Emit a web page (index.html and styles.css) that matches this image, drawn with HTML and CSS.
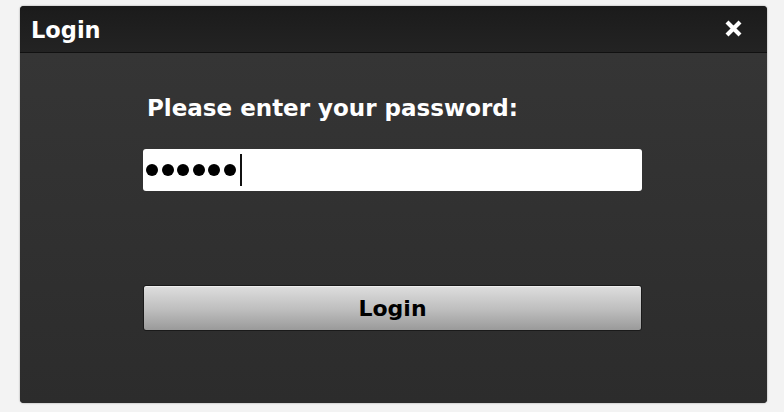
FILE: index.html
```html
<!DOCTYPE html>
<html lang="en">
<head>
<meta charset="utf-8">
<title>Login</title>
<link rel="stylesheet" href="styles.css">
</head>
<body>
<div class="dialog">
  <div class="header">
    <span class="title">Login</span>
    <span class="close">
      <svg width="19" height="17" viewBox="0 0 19 17"><path d="M3 2 L16 15 M16 2 L3 15" stroke="#fff" stroke-width="4.2" stroke-linecap="butt"/></svg>
    </span>
  </div>
  <div class="body">
    <div class="label">Please enter your password:</div>
    <div class="input">
      <span class="dots"><i></i><i></i><i></i><i></i><i></i><i></i></span>
      <span class="caret"></span>
    </div>
    <button class="btn">Login</button>
  </div>
</div>
</body>
</html>
```
FILE: styles.css
```css
html, body { margin: 0; padding: 0; }
body {
  width: 784px; height: 412px;
  background: #f3f3f3;
  font-family: "DejaVu Sans", Verdana, sans-serif;
  padding: 6px 17px 9px 20px;
  box-sizing: border-box;
}
.dialog {
  width: 747px; height: 397px;
  background: #303030;
  border-radius: 4px;
  overflow: hidden;
  display: flex; flex-direction: column;
  box-shadow: 0 0 2px rgba(0,0,0,0.4);
}
.header {
  height: 46px;
  background: linear-gradient(#1b1b1b, #232323);
  border-bottom: 1px solid #111;
  display: flex; align-items: center; justify-content: space-between;
  padding: 0 24px 0 11px;
}
.title { color: #fff; font-weight: bold; font-size: 22.5px; line-height: 26px; margin-top: 1px; }
.close { display: flex; margin-top: -2px; }
.body {
  flex: 1;
  background: linear-gradient(#353535, #2c2c2c);
  padding: 0 0 0 123px;
}
.label {
  color: #fff; font-weight: bold; font-size: 23px;
  line-height: 26px;
  margin: 42px 0 0 4px;
}
.input {
  width: 499px; height: 42px;
  margin-top: 28px;
  background: #fff;
  border-radius: 3px;
  display: flex; align-items: center;
  padding-left: 3px; box-sizing: border-box;
}
.dots { display: flex; gap: 3.5px; }
.dots i { width: 12px; height: 12px; border-radius: 50%; background: #000; display: block; }
.caret { width: 2px; height: 32px; background: #111; margin-left: 4px; }
.btn {
  display: block;
  width: 499px; height: 46px;
  margin-top: 94px;
  border: 1px solid #1a1a1a;
  border-radius: 3px;
  background: linear-gradient(#dedede, #bdbdbd 55%, #9a9a9a);
  box-shadow: inset 0 1px 0 rgba(255,255,255,0.5);
  font-family: "DejaVu Sans", Verdana, sans-serif;
  font-weight: bold; font-size: 22px; color: #000;
  padding: 0;
}
```
